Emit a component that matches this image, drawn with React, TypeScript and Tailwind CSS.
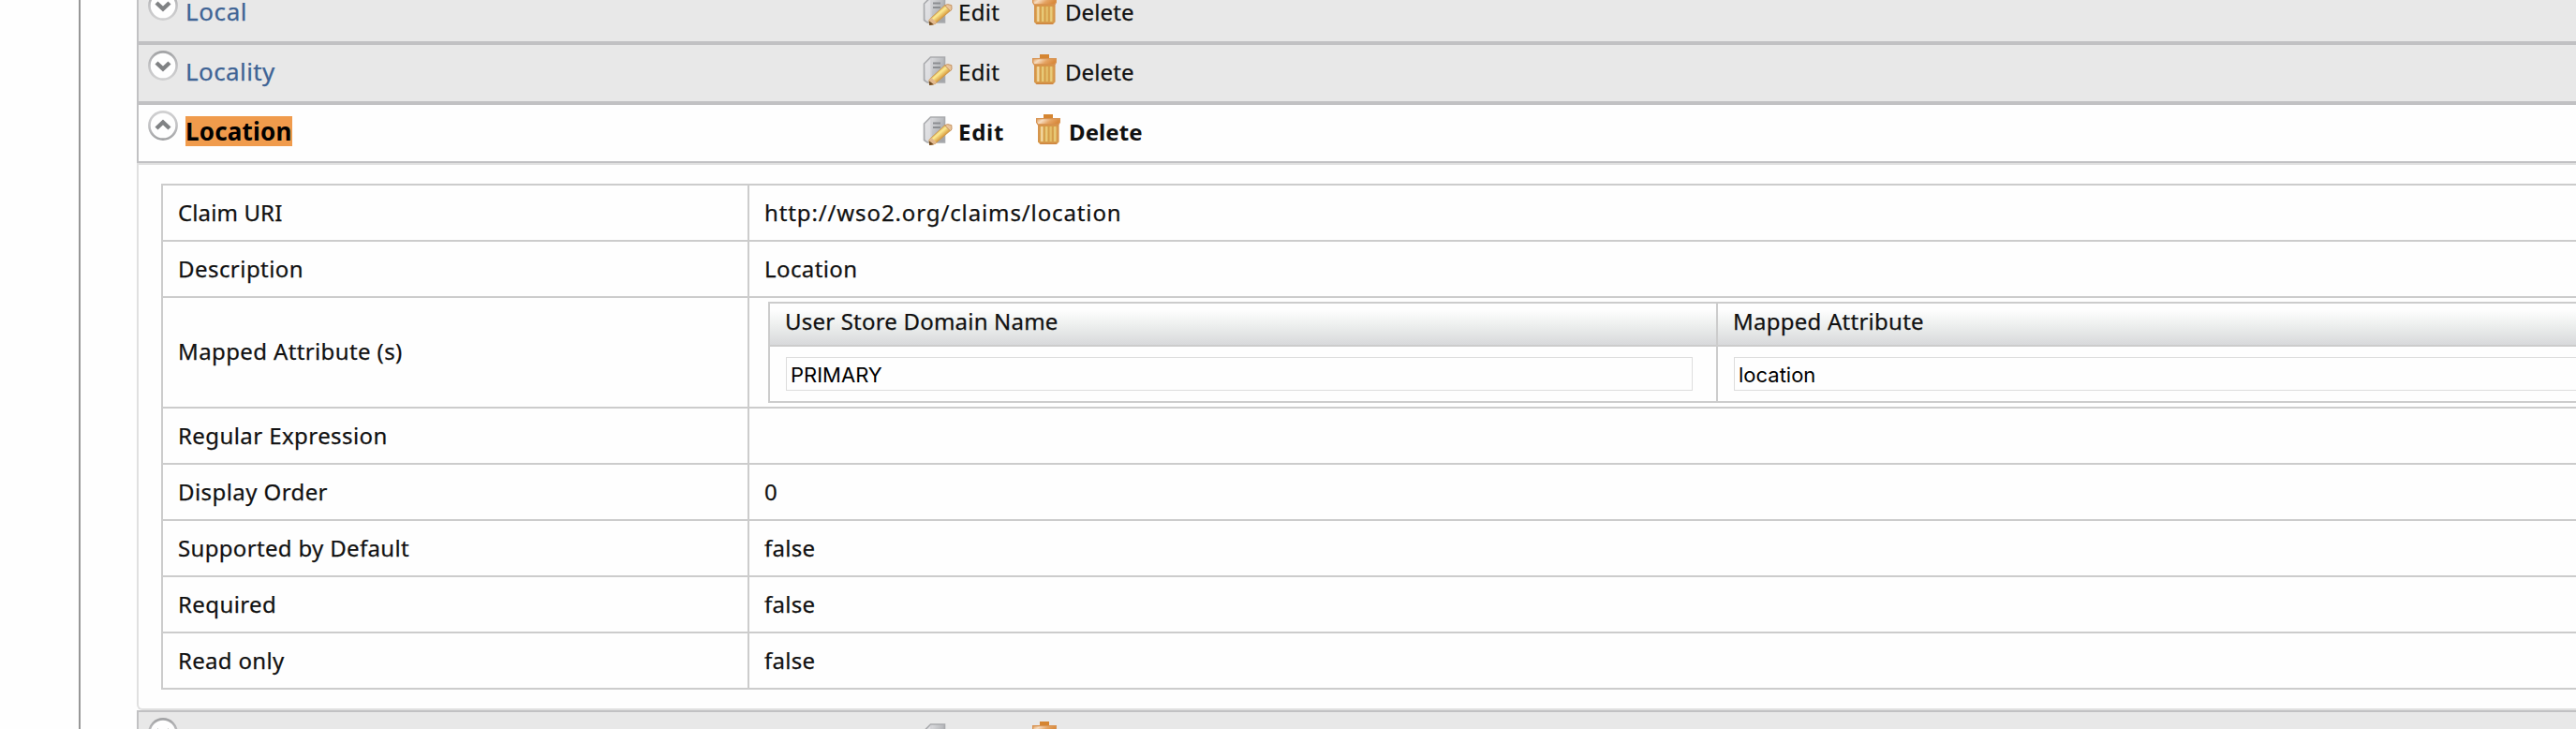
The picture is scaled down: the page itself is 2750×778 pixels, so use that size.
import React, { useId } from "react";

function ToggleIcon({ open }: { open: boolean }) {
  const id = useId();
  return (
    <svg className="mt-[6px] ml-[10px] h-8 w-8 shrink-0" viewBox="0 0 32 32" fill="none">
      <defs>
        <linearGradient id={id} x1="0" y1={open ? "1" : "0"} x2="0" y2={open ? "0" : "1"}>
          <stop offset="0" stopColor="#a2a3a5" />
          <stop offset="0.5" stopColor="#c2c2c4" />
          <stop offset="1" stopColor="#d0d0d1" />
        </linearGradient>
      </defs>
      <circle cx="16" cy="16" r="14.6" fill="#fefefe" stroke={`url(#${id})`} strokeWidth="2.6" />
      <path d={open ? "M9 19 L16 12.4 L23 19" : "M9 13 L16 19.6 L23 13"} stroke="#808284" strokeWidth="4.4" />
    </svg>
  );
}

function EditIcon() {
  const id = useId();
  return (
    <svg className="mt-[11px] h-8 w-8 shrink-0" viewBox="0 0 32 32" fill="none">
      <defs>
        <linearGradient id={id + "p"} x1="0" y1="0" x2="1" y2="0.6">
          <stop offset="0" stopColor="#eeeef0" />
          <stop offset="0.5" stopColor="#c9cacd" />
          <stop offset="1" stopColor="#a3a5a9" />
        </linearGradient>
        <linearGradient id={id + "y"} x1="14" y1="17" x2="20" y2="24" gradientUnits="userSpaceOnUse">
          <stop offset="0" stopColor="#e0b04c" />
          <stop offset="0.45" stopColor="#fbea94" />
          <stop offset="1" stopColor="#dba043" />
        </linearGradient>
      </defs>
      <path d="M8.5 2 H23.5 V29 H5 L1.5 26.5 V9 Z" fill={`url(#${id}p)`} stroke="#a9aaad" strokeWidth="1.6" />
      <path d="M3 10 L9 3.5 V26 L5 28 L3 26 Z" fill="#e2e2e5" opacity="0.8" />
      <path d="M9 3 V28" stroke="#d0d1d4" strokeWidth="1.5" />
      <path d="M11 8.6 H19 M11 13 H19" stroke="#8c8e92" strokeWidth="2" />
      <path d="M7 26 L24 10.5 L30.5 15.5 L13 30.5 L7.5 31.5 Z" fill={`url(#${id}y)`} stroke="#cf9748" strokeWidth="1" />
      <path d="M23.5 10.8 L26.5 9.6 L30.8 10.6 L31 14.8 L29.6 16.8 Z" fill="#e9c49a" stroke="#c69260" strokeWidth="1" />
      <path d="M7 25.8 L9.5 24 L15 29.2 L12 31 L7.5 31.5 Z" fill="#e2b98d" />
      <path d="M7 27.5 L12 31.2 L7 32 Z" fill="#714a20" />
    </svg>
  );
}

function TrashIcon() {
  const id = useId();
  return (
    <svg className="mt-[10px] h-8 w-[26px] shrink-0" viewBox="0 0 26 32" fill="none">
      <defs>
        <linearGradient id={id + "l"} x1="0" y1="0" x2="1" y2="0.3">
          <stop offset="0" stopColor="#e09e5c" />
          <stop offset="0.3" stopColor="#f6dcc0" />
          <stop offset="0.65" stopColor="#e5a463" />
          <stop offset="1" stopColor="#d98a3c" />
        </linearGradient>
        <linearGradient id={id + "b"} x1="0" y1="0" x2="0" y2="1">
          <stop offset="0" stopColor="#cf8238" />
          <stop offset="0.2" stopColor="#dfaa55" />
          <stop offset="0.85" stopColor="#dca750" />
          <stop offset="1" stopColor="#cc7f3e" />
        </linearGradient>
      </defs>
      <path d="M8 0 H18 V5 H8 Z" fill="#d58531" />
      <path d="M2 10 H24.4 V29.5 L22 32 H4.5 L2 29.5 Z" fill={`url(#${id}b)`} />
      <path d="M3 12 V29 M23.4 12 V29" stroke="#d4924c" strokeWidth="1.8" />
      <path d="M6.3 13 V29" stroke="#f3d9a4" strokeWidth="2.2" />
      <path d="M11.2 13 V29 M20.2 13 V29" stroke="#e8cb7a" strokeWidth="2.2" />
      <path d="M8.8 13 V29 M13.5 13 V29 M17.8 13 V29" stroke="#d29c4a" strokeWidth="1.2" />
      <path d="M15.7 13 V29" stroke="#e4c06b" strokeWidth="2" />
      <path d="M0.6 4.6 H25.4 V8.5 L24 10.8 H2 L0.6 8.5 Z" fill={`url(#${id}l)`} stroke="#d89352" strokeWidth="1.2" />
    </svg>
  );
}

function ClaimHeader({ name, spacing, open = false }: { name: string; spacing: string; open?: boolean }) {
  return (
    <div className={`flex h-16 shrink-0 border-y-2 border-l-2 border-[#c1c1c3] ${open ? "bg-[#fefefe] font-bold [-webkit-text-stroke:0px]" : "bg-[#e8e8e8]"}`}>
      <div className="flex w-[837px] shrink-0 gap-2">
        <ToggleIcon open={open} />
        <a className={`mt-3 h-8 text-[26px] leading-8 ${spacing} ${open ? "bg-[#f09b4c] text-black" : "text-[#3f6495]"}`}>{name}</a>
      </div>
      <a className={`flex shrink-0 gap-[6px] ${open ? "w-[121px]" : "w-[117px]"}`}>
        <EditIcon />
        <span className={`mt-[13px] leading-8 ${open ? "tracking-[0.7px]" : "tracking-[0.3px]"}`}>Edit</span>
      </a>
      <a className="flex shrink-0 gap-[9px]">
        <TrashIcon />
        <span className="mt-[13px] leading-8 tracking-[0.1px]">Delete</span>
      </a>
    </div>
  );
}

function Row({ label, spacing, tall = false, children }: { label: string; spacing: string; tall?: boolean; children?: React.ReactNode }) {
  return (
    <div className={`flex border-t-2 border-[#cccccc] ${tall ? "h-[118px]" : "h-[60px]"}`}>
      <div className={`flex w-[624px] shrink-0 items-center pl-4 ${spacing} ${tall ? "pb-[2px]" : ""}`}>{label}</div>
      <div className="flex grow items-center border-l-2 border-[#cccccc]">{children}</div>
    </div>
  );
}

function MappingColumn({ title, spacing, value, last = false }: { title: string; spacing: string; value: string; last?: boolean }) {
  return (
    <div className={last ? "w-[1010px] shrink-0 border-l-2 border-[#cccccc]" : "w-[1010px] shrink-0"}>
      <div className={`flex h-[46px] items-center border-b-2 border-[#cccccc] bg-linear-to-b from-[#fefefe] from-15% via-[#eef0ef] via-50% to-[#d8d9db] pb-[7px] pl-4 ${spacing}`}>
        {title}
      </div>
      <div className="pt-[11px] pr-[25px] pl-[17px]">
        <div className="flex h-9 items-center border border-[#dddddd] bg-[#fefefe] pt-px pl-1 font-['Inter',sans-serif] text-[22px] leading-none text-black [-webkit-text-stroke:0px]">
          {value}
        </div>
      </div>
    </div>
  );
}

export default function App() {
  return (
    <div className="flex h-[778px] w-full overflow-hidden bg-[#fefefe] pl-[84px] font-['Noto_Sans',sans-serif] text-2xl text-[#111111] [-webkit-text-stroke:0.25px]">
      <div className="flex min-w-0 grow border-l-2 border-[#979797] pl-[60px]">
        <div className="-mt-[18px] flex min-w-0 grow flex-col">
          <ClaimHeader name="Local" spacing="tracking-[0.6px]" />
          <ClaimHeader name="Locality" spacing="tracking-[0.4px]" />
          <ClaimHeader name="Location" spacing="tracking-[0.2px]" open />
          <div className="shrink-0 rounded-bl-md border-y-2 border-l-2 border-[#e0e0e0] bg-[#fefefe] py-5 pl-6">
            <div className="border-b-2 border-l-2 border-[#cccccc]">
              <Row label="Claim URI" spacing="tracking-[0.12px]">
                <span className="pl-4 tracking-[0.88px]">http://wso2.org/claims/location</span>
              </Row>
              <Row label="Description" spacing="tracking-[0.45px]">
                <span className="pl-4 tracking-[0.4px]">Location</span>
              </Row>
              <Row label="Mapped Attribute (s)" spacing="tracking-[0.38px]" tall>
                <div className="ml-5 flex h-[108px] w-[2024px] shrink-0 border-2 border-[#cccccc]">
                  <MappingColumn title="User Store Domain Name" spacing="tracking-[0.2px]" value="PRIMARY" />
                  <MappingColumn title="Mapped Attribute" spacing="tracking-[0.25px]" value="location" last />
                </div>
              </Row>
              <Row label="Regular Expression" spacing="tracking-[0.42px]" />
              <Row label="Display Order" spacing="tracking-[0.42px]">
                <span className="pl-4">0</span>
              </Row>
              <Row label="Supported by Default" spacing="tracking-[0.33px]">
                <span className="pl-4 tracking-[0.3px]">false</span>
              </Row>
              <Row label="Required" spacing="tracking-[0.4px]">
                <span className="pl-4 tracking-[0.3px]">false</span>
              </Row>
              <Row label="Read only" spacing="tracking-[0.31px]">
                <span className="pl-4 tracking-[0.3px]">false</span>
              </Row>
            </div>
          </div>
          <ClaimHeader name="Mobile" spacing="tracking-[0.4px]" />
        </div>
      </div>
    </div>
  );
}
